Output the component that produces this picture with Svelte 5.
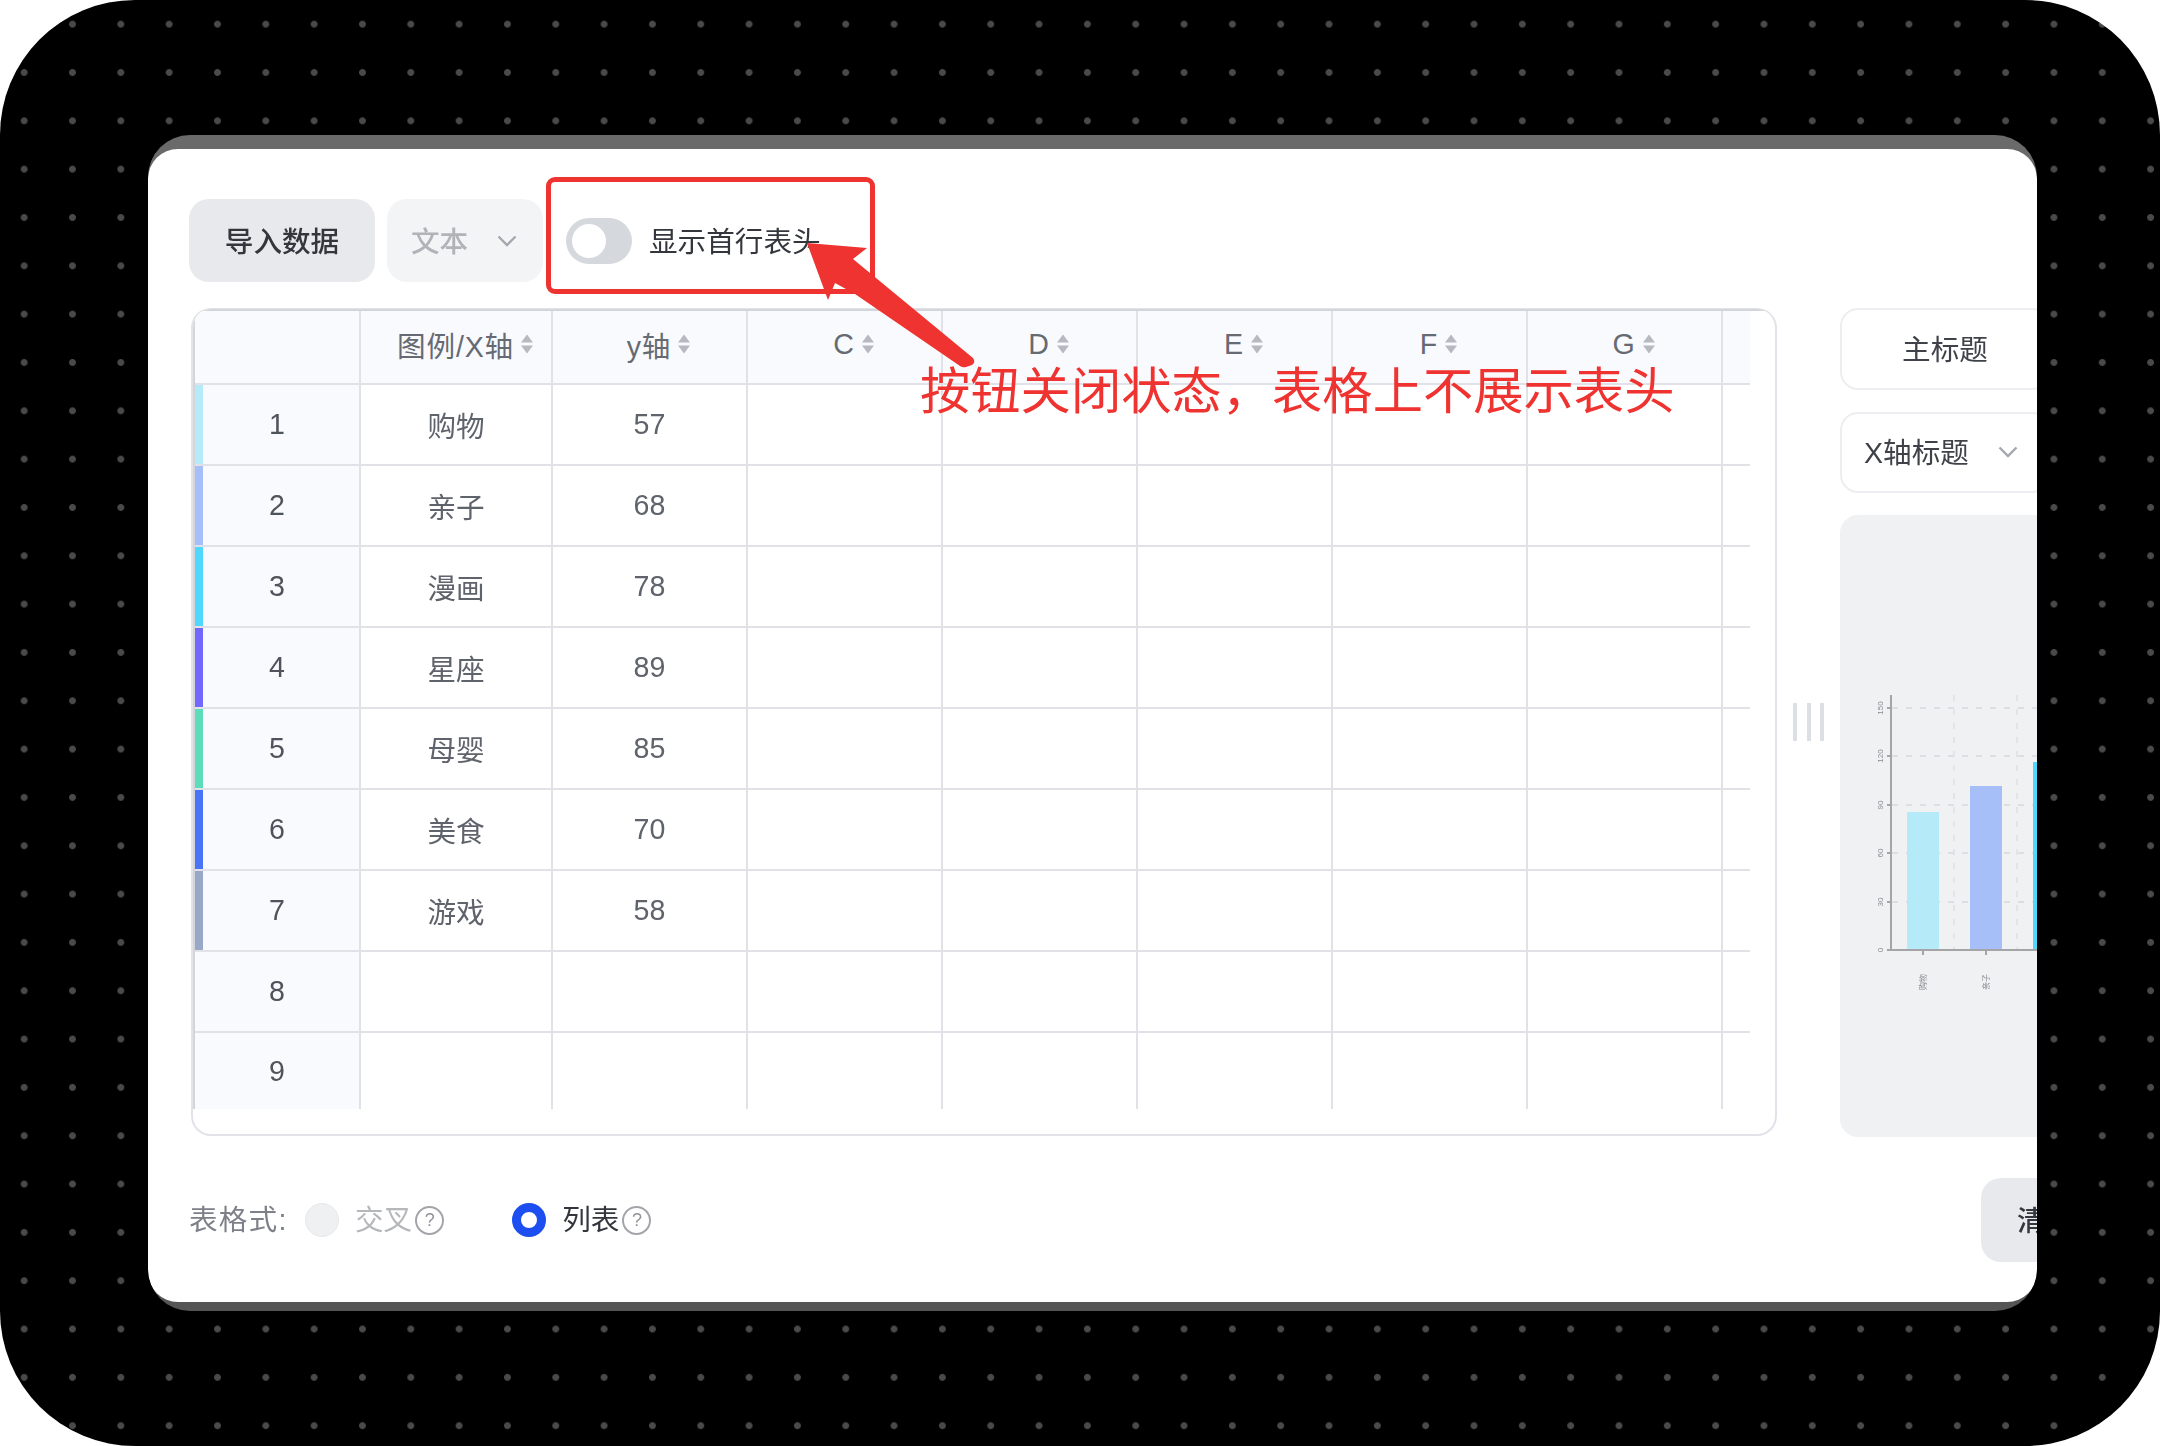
<script>
  const columns = [
    { label: "图例/X轴" },
    { label: "y轴" },
    { label: "C" },
    { label: "D" },
    { label: "E" },
    { label: "F" },
    { label: "G" }
  ];

  const rows = [
    { name: "购物", value: 57, color: "#b5ebf8" },
    { name: "亲子", value: 68, color: "#a6bff9" },
    { name: "漫画", value: 78, color: "#4fd7fd" },
    { name: "星座", value: 89, color: "#7268fb" },
    { name: "母婴", value: 85, color: "#5cdcb9" },
    { name: "美食", value: 70, color: "#4a74f8" },
    { name: "游戏", value: 58, color: "#9aa8c8" },
    { name: "", value: "", color: "#f9fafe" },
    { name: "", value: "", color: "#f9fafe" }
  ];

  const emptyCols = [0, 1, 2, 3, 4];
  const gridY = [18, 66, 115, 163, 212];
  const yTicks = [
    { y: 18, text: "150" },
    { y: 66, text: "120" },
    { y: 115, text: "90" },
    { y: 163, text: "60" },
    { y: 212, text: "30" },
    { y: 260, text: "0" }
  ];
  const bars = [
    { x: 67, w: 32, top: 122, fill: "#b5ebf8", tick: 83, label: "购物" },
    { x: 130, w: 32, top: 96, fill: "#a6bff9", tick: 146, label: "亲子" },
    { x: 193, w: 32, top: 72, fill: "#4fd7fd", tick: 209, label: "漫画" }
  ];
</script>

{#snippet sortIcon()}
  <svg class="sort" viewBox="0 0 12 20" width="12" height="20" aria-hidden="true">
    <path d="M6 0.5 L12 8.5 H0 Z" />
    <path d="M6 19.5 L12 11.5 H0 Z" />
  </svg>
{/snippet}

{#snippet chevron()}
  <svg class="chevron" viewBox="0 0 20 12" width="20" height="12" aria-hidden="true">
    <path d="M1.5 1.5 L10 10 L18.5 1.5" />
  </svg>
{/snippet}

<div class="frame">
  <div class="window">
    <div class="sheet">
      <div class="toolbar">
        <button class="btn import">导入数据</button>
        <div class="type-select">
          <span>文本</span>
          {@render chevron()}
        </div>
        <div class="toggle"><span class="knob"></span></div>
        <span class="toggle-label">显示首行表头</span>
      </div>

      <div class="workspace">
        <div class="table-box">
          <div class="grid">
            <div class="cell head index"></div>
            {#each columns as col}
              <div class="cell head">
                <span>{col.label}</span>
                {@render sortIcon()}
              </div>
            {/each}
            <div class="cell head tail"></div>

            {#each rows as row, i}
              <div class="cell index" class:last={i === 8} style:--stripe={row.color}>{i + 1}</div>
              <div class="cell" class:last={i === 8}>{row.name}</div>
              <div class="cell" class:last={i === 8}>{row.value}</div>
              {#each emptyCols as c}
                <div class="cell" class:last={i === 8}></div>
              {/each}
              <div class="cell tail" class:last={i === 8}></div>
            {/each}
          </div>
        </div>

        <div class="handle"><i></i><i></i><i></i></div>

        <div class="side">
          <div class="field center">主标题</div>
          <div class="field">
            <span>X轴标题</span>
            {@render chevron()}
          </div>
          <div class="chart">
            <svg viewBox="0 0 400 622" width="400" height="622" aria-hidden="true">
              <g transform="translate(0 175)">
                {#each gridY as y}
                  <line x1="52" x2="400" y1={y} y2={y} class="dash" />
                {/each}
                <line x1="114" x2="114" y1="5" y2="260" class="dash upright" />
                <line x1="177" x2="177" y1="5" y2="260" class="dash upright" />
                {#each bars as bar}
                  <rect x={bar.x} y={bar.top} width={bar.w} height={260 - bar.top} fill={bar.fill} />
                  <line x1={bar.tick} x2={bar.tick} y1="260" y2="265" class="axis" />
                  <text class="tick" transform="translate({bar.tick + 3} 300) rotate(-90)">{bar.label}</text>
                {/each}
                <line x1="51" x2="51" y1="5" y2="260" class="axis" />
                <line x1="47" x2="400" y1="260" y2="260" class="axis" />
                {#each yTicks as t}
                  <line x1="47" x2="51" y1={t.y} y2={t.y} class="axis" />
                  <text class="tick" text-anchor="middle" transform="translate(43 {t.y}) rotate(-90)">{t.text}</text>
                {/each}
              </g>
            </svg>
          </div>
        </div>
      </div>

      <div class="footer">
        <div class="format">
          <span class="format-label">表格式:</span>
          <span class="radio off"></span>
          <span class="option muted">交叉</span>
          <span class="help">?</span>
          <span class="radio on"></span>
          <span class="option">列表</span>
          <span class="help">?</span>
        </div>
        <button class="btn clear">清空</button>
      </div>
    </div>
  </div>

  <div class="mark-box"></div>
  <svg class="mark-arrow" viewBox="0 0 200 160" width="200" height="160" aria-hidden="true">
    <path d="M7 13 L67 18 L53 29 L173 128 Q176 132 172 135 L166 137 Q163 138 160 136 L55 64 L35 53 L28 70 Z" />
  </svg>
  <div class="mark-text">按钮关闭状态，表格上不展示表头</div>
</div>

<style>
  :global(body) {
    margin: 0;
    background: #fff;
  }

  .frame {
    position: relative;
    box-sizing: border-box;
    width: 2160px;
    height: 1446px;
    padding: 135px 0 0 148px;
    border-radius: 135px;
    overflow: hidden;
    background-color: #000;
    background-image: radial-gradient(circle, #4a4a4a 3px, transparent 3.8px);
    background-size: 48.33px 48.33px;
    font-family: "Liberation Sans", "Noto Sans CJK SC", sans-serif;
    font-size: 28.6px;
    color: #555a62;
  }

  .window {
    box-sizing: border-box;
    width: 1889px;
    height: 1176px;
    padding: 14px 0 9px;
    border-radius: 42px;
    overflow: hidden;
    background: linear-gradient(#6a6a6a, #555);
    filter: blur(0.7px);
  }

  .sheet {
    box-sizing: border-box;
    height: 100%;
    padding: 50px 0 0 41px;
    border-radius: 30px;
    background: #fff;
    overflow: hidden;
  }

  .toolbar {
    display: flex;
    align-items: center;
    height: 83px;
  }

  .btn {
    border: 0;
    font: inherit;
    font-weight: 500;
    color: #33373d;
    background: #e8e9ed;
    border-radius: 20px;
  }

  .import {
    width: 186px;
    height: 83px;
    padding: 0 0 3px;
  }

  .type-select {
    display: flex;
    align-items: center;
    justify-content: space-between;
    box-sizing: border-box;
    width: 156px;
    height: 83px;
    margin-left: 12px;
    padding: 0 26px 0 24px;
    border-radius: 20px;
    background: #f3f4f6;
    font-weight: 500;
    color: #b0b3b8;
  }

  .type-select span {
    padding-bottom: 3px;
  }

  .chevron {
    fill: none;
    stroke: #a4a7ad;
    stroke-width: 2.4;
  }

  .toggle {
    display: flex;
    align-items: center;
    box-sizing: border-box;
    width: 66px;
    height: 46px;
    margin-left: 23px;
    padding-left: 6px;
    border-radius: 23px;
    background: #d5d8dd;
  }

  .knob {
    width: 34px;
    height: 34px;
    border-radius: 50%;
    background: #fff;
  }

  .toggle-label {
    margin-left: 17px;
    padding-bottom: 3px;
    color: #33373d;
  }

  .workspace {
    display: flex;
    align-items: flex-start;
    margin-top: 26px;
    margin-left: 2px;
  }

  .table-box {
    box-sizing: border-box;
    flex: none;
    width: 1586px;
    height: 828px;
    border: 2px solid #e1e3e8;
    border-top-width: 1px;
    border-radius: 20px;
    overflow: hidden;
  }

  .grid {
    display: grid;
    grid-template-columns: 166px 192px 195px 195px 195px 195px 195px 195px 27px;
    grid-template-rows: 74px repeat(8, 81px) 76px;
    border-top: 2px solid #d3d5da;
    border-left: 2px solid #d3d5da;
  }

  .cell {
    display: flex;
    align-items: center;
    justify-content: center;
    box-sizing: border-box;
    border-right: 2px solid #e0e2e7;
    border-bottom: 2px solid #e0e2e7;
    color: #5f636b;
  }

  .cell.last {
    border-bottom: 0;
  }

  .cell.tail {
    border-right: 0;
  }

  .head {
    gap: 7px;
    padding: 0 0 6px 18px;
    background: #f9fafe;
    letter-spacing: 0.8px;
    color: #666a72;
  }

  .index {
    --stripe: #f9fafe;
    padding: 0;
    background: linear-gradient(90deg, var(--stripe) 8px, #f9fafe 8px);
    color: #4f535b;
  }

  .sort {
    fill: #b6b9bf;
  }

  .handle {
    flex: none;
    display: flex;
    justify-content: center;
    gap: 9.5px;
    width: 63px;
    padding-top: 395px;
  }

  .handle i {
    width: 4px;
    height: 38px;
    background: #dcdfe4;
  }

  .side {
    flex: none;
    display: flex;
    flex-direction: column;
    gap: 22px;
    width: 400px;
  }

  .field {
    display: flex;
    align-items: center;
    justify-content: space-between;
    box-sizing: border-box;
    width: 210px;
    height: 81.5px;
    padding: 0 30px 0 22px;
    border: 2px solid #eceef1;
    border-radius: 18px;
    color: #3f4349;
  }

  .field span {
    padding-bottom: 4px;
  }

  .field.center {
    justify-content: center;
    padding: 0 0 2px;
  }

  .chart {
    height: 622px;
    border-radius: 18px;
    background: #f0f1f3;
    overflow: hidden;
  }

  .dash {
    stroke: #d6d8dc;
    stroke-width: 1.5;
    stroke-dasharray: 6 8;
  }

  .dash.upright {
    stroke: #dfe0e3;
  }

  .axis {
    stroke: #a5a5a8;
    stroke-width: 2;
  }

  .tick {
    font-size: 8px;
    fill: #8a8c90;
  }

  .footer {
    display: flex;
    align-items: center;
    justify-content: space-between;
    width: 1992px;
    height: 84px;
    margin-top: 41px;
  }

  .format {
    display: flex;
    align-items: center;
  }

  .format-label {
    width: 116px;
    padding-bottom: 5px;
    letter-spacing: 1.2px;
    color: #7d8088;
  }

  .radio {
    box-sizing: border-box;
    width: 34px;
    height: 34px;
    border-radius: 50%;
  }

  .radio.off {
    background: #eff0f2;
    border: 1px solid #e7e8eb;
  }

  .radio.on {
    margin-left: 68px;
    background: #fff;
    border: 9px solid #1d4ff0;
  }

  .option {
    margin-left: 16px;
    padding-bottom: 5px;
    color: #33373d;
  }

  .option.muted {
    color: #b5b7bb;
  }

  .help {
    box-sizing: border-box;
    width: 29px;
    height: 29px;
    margin-left: 3px;
    border: 2px solid #a3a5aa;
    border-radius: 50%;
    font-size: 18px;
    line-height: 25px;
    text-align: center;
    color: #8f9196;
  }

  .clear {
    width: 200px;
    height: 84px;
    padding: 0 0 3px 36px;
    text-align: left;
  }

  .mark-box {
    position: absolute;
    left: 546px;
    top: 177px;
    box-sizing: border-box;
    width: 329px;
    height: 117px;
    border: 5.5px solid #ee3330;
    border-radius: 9px;
  }

  .mark-arrow {
    position: absolute;
    left: 800px;
    top: 230px;
    fill: #ee3330;
  }

  .mark-text {
    position: absolute;
    left: 920px;
    top: 356px;
    font-size: 50.3px;
    line-height: 72px;
    white-space: nowrap;
    color: #ee3330;
    filter: blur(0.4px);
  }
</style>
